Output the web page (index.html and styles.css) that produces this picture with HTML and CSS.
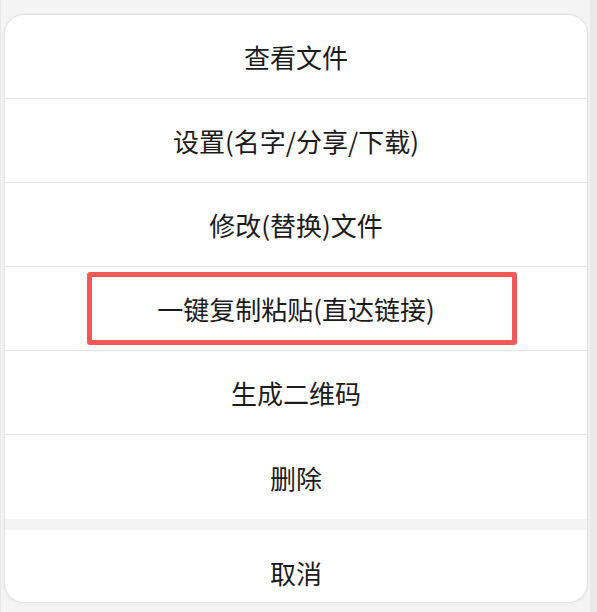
FILE: index.html
```html
<!DOCTYPE html>
<html>
<head>
    <meta charset="utf-8">
    <title>文件操作</title>
    <link rel="stylesheet" href="styles.css">
</head>
<body>
    <div class="page">
        <div class="sheet">
            <div class="menu">
                <div class="item">查看文件</div>
                <div class="item">设置(名字/分享/下载)</div>
                <div class="item">修改(替换)文件</div>
                <div class="item"><span class="mark">一键复制粘贴(直达链接)</span></div>
                <div class="item">生成二维码</div>
                <div class="item last">删除</div>
            </div>
            <div class="divider"></div>
            <div class="item cancel">取消</div>
        </div>
        <div class="rail"></div>
    </div>
</body>
</html>
```

FILE: styles.css
```css
html, body {
    margin: 0;
    padding: 0;
}
body {
    font-family: "Microsoft YaHei", "Noto Sans CJK SC", "Noto Sans", sans-serif;
    background-color: #f4f4f4;
    color: #1b1b1b;
}
.page {
    display: flex;
    height: 612px;
    padding: 14px 0 9px 3px;
    box-sizing: border-box;
    border-left: 1px solid #e6e6e6;
}
.sheet {
    flex: 1;
    display: flex;
    flex-direction: column;
    background-color: #fff;
    border: 1px solid #e2e2e2;
    border-radius: 20px;
    overflow: hidden;
    box-shadow: 0 1px 4px rgba(0, 0, 0, 0.05);
}
.rail {
    width: 7px;
    margin-left: 2px;
    margin-top: -14px;
    margin-bottom: -9px;
    background-color: #e9e9e9;
}
.item {
    height: 83px;
    display: flex;
    align-items: center;
    justify-content: center;
    font-size: 26px;
    border-bottom: 1px solid #e6e6e6;
}
.item.last {
    border-bottom: none;
    height: 84px;
}
.mark {
    display: flex;
    align-items: center;
    justify-content: center;
    box-sizing: border-box;
    width: 430px;
    height: 73px;
    margin-left: 12px;
    padding-right: 12px;
    border: 5px solid #f25858;
    border-radius: 3px;
}
.divider {
    height: 11px;
    background-color: #f4f4f4;
}
.cancel {
    flex: 1;
    border-bottom: none;
    padding-top: 12px;
}
```
